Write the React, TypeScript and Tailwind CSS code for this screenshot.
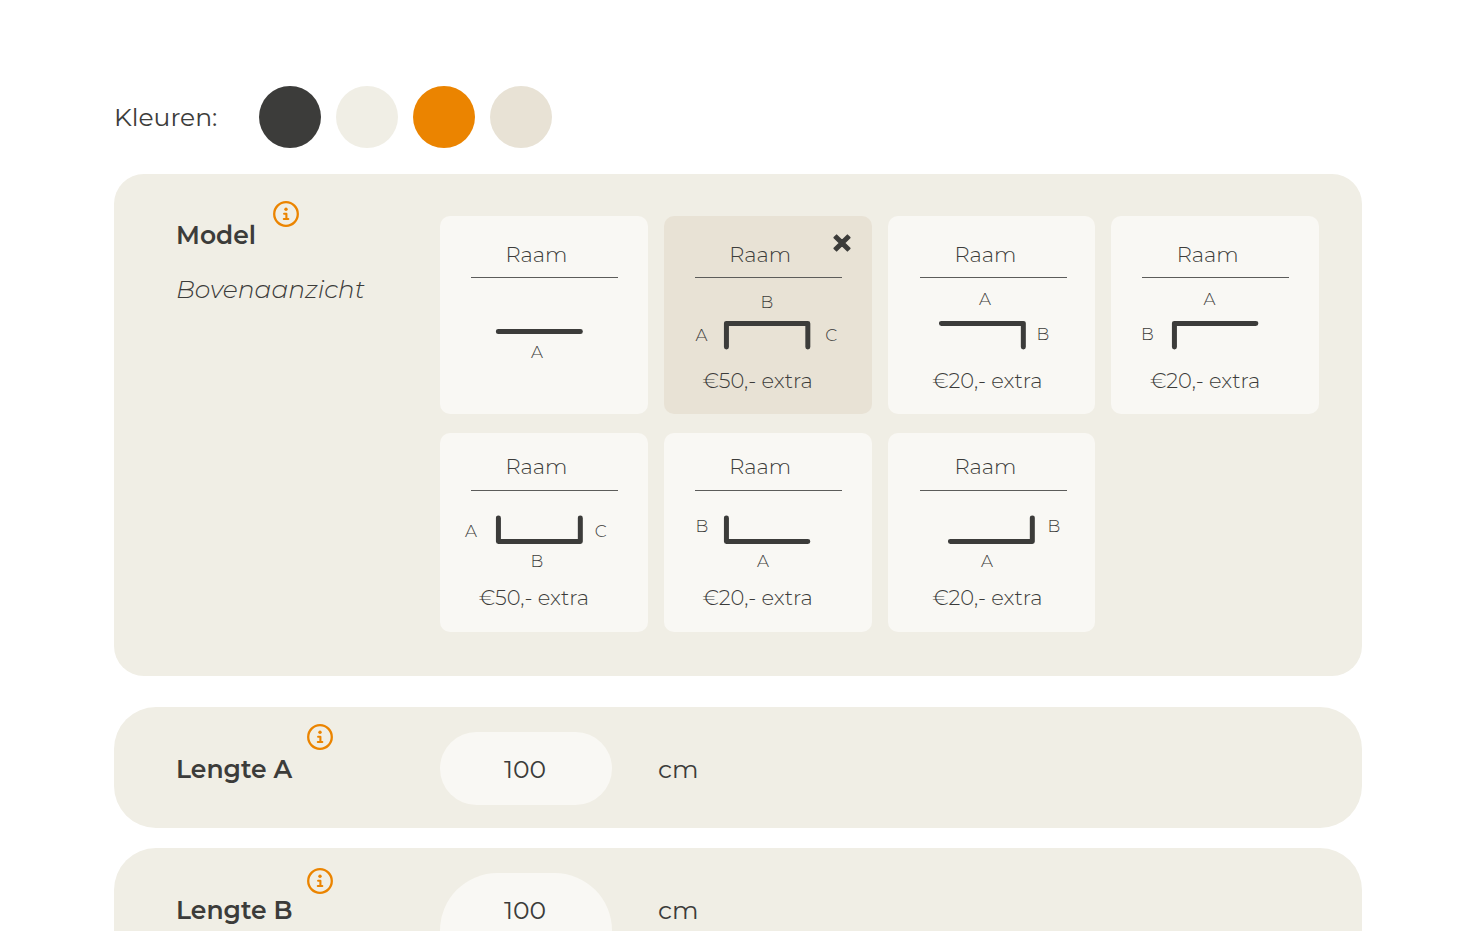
import { useState } from "react";

type Label = { text: string; x: number; y: number };

type Model = {
  id: string;
  name: string;
  path: string;
  labels: Label[];
  price?: string;
  bottom?: boolean;
  cornerRight?: boolean;
};

const models: Model[] = [
  {
    id: "straight",
    name: "Raam",
    path: "M58.5 53.5H140.5",
    labels: [{ text: "A", x: 97, y: 80 }],
  },
  {
    id: "u-top",
    name: "Raam",
    path: "M62.5 69V45.5H144V69",
    labels: [
      { text: "A", x: 37.5, y: 63 },
      { text: "B", x: 103, y: 30 },
      { text: "C", x: 167.5, y: 63 },
    ],
    price: "€50,- extra",
  },
  {
    id: "corner-top-right",
    name: "Raam",
    path: "M53.5 45.5H135.5V69",
    labels: [
      { text: "A", x: 97, y: 27 },
      { text: "B", x: 155, y: 62 },
    ],
    price: "€20,- extra",
    cornerRight: true,
  },
  {
    id: "corner-top-left",
    name: "Raam",
    path: "M63.5 69V45.5H145",
    labels: [
      { text: "A", x: 98.5, y: 27 },
      { text: "B", x: 36.5, y: 62 },
    ],
    price: "€20,- extra",
  },
  {
    id: "u-bottom",
    name: "Raam",
    path: "M58.5 27V50.5H140.5V27",
    labels: [
      { text: "A", x: 31, y: 46 },
      { text: "B", x: 97, y: 76 },
      { text: "C", x: 161, y: 46 },
    ],
    price: "€50,- extra",
    bottom: true,
  },
  {
    id: "corner-bottom-left",
    name: "Raam",
    path: "M62.5 27V50.5H144",
    labels: [
      { text: "A", x: 99, y: 76 },
      { text: "B", x: 38, y: 41 },
    ],
    price: "€20,- extra",
    bottom: true,
  },
  {
    id: "corner-bottom-right",
    name: "Raam",
    path: "M62.5 50.5H144.5V27",
    labels: [
      { text: "A", x: 99, y: 76 },
      { text: "B", x: 166, y: 41 },
    ],
    price: "€20,- extra",
    bottom: true,
    cornerRight: true,
  },
];

const swatches = [
  { name: "Antraciet", className: "bg-[#3c3c3a]" },
  { name: "Gebroken wit", className: "bg-[#f0eee5]" },
  { name: "Oranje", className: "bg-[#eb8400]" },
  { name: "Zand", className: "bg-[#e8e2d5]" },
];

function InfoButton({ label }: { label: string }) {
  return (
    <button type="button" aria-label={label} className="shrink-0 self-start text-[#eb8400]">
      <svg width="26" height="26" viewBox="0 0 26 26" fill="none" stroke="currentColor" className="block">
        <circle cx="13" cy="13" r="11.8" strokeWidth="2.3" />
        <circle cx="13" cy="8.3" r="1.7" fill="currentColor" stroke="none" />
        <path d="M11.1 12.7H13.4V17.8M10.8 18H15.3" strokeWidth="2.1" strokeLinecap="round" strokeLinejoin="round" />
      </svg>
    </button>
  );
}

function CrossIcon() {
  return (
    <svg width="18" height="18" viewBox="0 0 18 18" className="absolute top-[18px] right-[21px]">
      <path
        d="M3.6 1.2 9 6.6 14.4 1.2 16.8 3.6 11.4 9 16.8 14.4 14.4 16.8 9 11.4 3.6 16.8 1.2 14.4 6.6 9 1.2 3.6z"
        fill="#3c3c3a"
        stroke="#3c3c3a"
        strokeWidth="1.6"
        strokeLinejoin="round"
      />
    </svg>
  );
}

function ModelCard({ model, selected, onSelect }: { model: Model; selected: boolean; onSelect: () => void }) {
  return (
    <button
      type="button"
      aria-pressed={selected}
      onClick={onSelect}
      className={`relative flex flex-col rounded-[10px] text-[21px] leading-[30px] font-light ${
        model.bottom ? "pt-[19px] pb-[19px]" : "pt-6 pb-[18px]"
      } ${selected ? "bg-[#e8e2d5]" : "bg-[#f9f8f4]"}`}
    >
      <span
        className={`self-stretch border-b border-[#5c5c5a] pr-4 ${model.bottom ? "pb-2" : "pb-[7px]"} ${
          model.cornerRight ? "mr-7 ml-8" : "mr-[30px] ml-[31px]"
        }`}
      >
        {model.name}
      </span>
      <svg viewBox={model.bottom ? "0 0 208 92" : "0 0 208 88"} className="w-full">
        <path
          d={model.path}
          fill="none"
          stroke="#3c3c3a"
          strokeWidth="5"
          strokeLinecap="round"
          strokeLinejoin="round"
        />
        {model.labels.map((l) => (
          <text key={l.text} x={l.x} y={l.y} textAnchor="middle" fontSize="17" fill="#3c3c3a">
            {l.text}
          </text>
        ))}
      </svg>
      {model.price && <span className={`self-stretch ${model.cornerRight ? "pr-2" : "pr-5"}`}>{model.price}</span>}
      {selected && <CrossIcon />}
    </button>
  );
}

export default function App() {
  const [selected, setSelected] = useState("u-top");
  const [lengthA, setLengthA] = useState("100");
  const [lengthB, setLengthB] = useState("100");

  return (
    <main className="h-screen overflow-hidden bg-white px-[114px] pt-[86px] font-['Montserrat','Inter',sans-serif] text-[25px] leading-9 text-[#3c3c3a] antialiased">
      {/* colours */}
      <div className="mb-[26px] flex items-center">
        <span className="w-[145px] shrink-0 font-normal">Kleuren:</span>
        <div className="flex gap-[15px]">
          {swatches.map((s) => (
            <button
              key={s.name}
              type="button"
              aria-label={s.name}
              className={`size-[62px] rounded-full ${s.className}`}
            />
          ))}
        </div>
      </div>

      {/* model */}
      <section className="flex rounded-[30px] bg-[#f0eee5] pt-[42px] pr-[43px] pb-11 pl-[62px]">
        <div className="-mt-[15px] w-[264px] shrink-0">
          <div className="flex gap-[17px]">
            <h2 className="mt-4 font-semibold">Model</h2>
            <InfoButton label="Info over model" />
          </div>
          <p className="mt-[18px] font-light italic">Bovenaanzicht</p>
        </div>
        <div className="grid grow grid-cols-4 gap-x-4 gap-y-[19px]">
          {models.map((m) => (
            <ModelCard key={m.id} model={m} selected={m.id === selected} onSelect={() => setSelected(m.id)} />
          ))}
        </div>
      </section>

      {/* lengths */}
      <section className="mt-[31px] flex items-start rounded-[42px] bg-[#f0eee5] pt-[25px] pb-[23px] pl-[62px]">
        <div className="-mt-2 flex w-[264px] shrink-0 gap-[15px]">
          <label htmlFor="length-a" className="mt-[27px] font-semibold">
            Lengte A
          </label>
          <InfoButton label="Info over lengte A" />
        </div>
        <input
          id="length-a"
          value={lengthA}
          onChange={(e) => setLengthA(e.target.value)}
          className="h-[73px] w-[172px] rounded-full bg-[#f9f8f4] pt-0.5 pr-0.5 text-center font-normal outline-none"
        />
        <span className="mt-[19px] ml-[46px] font-normal">cm</span>
      </section>

      <section className="mt-5 flex items-start rounded-[42px] bg-[#f0eee5] pt-[25px] pb-[23px] pl-[62px]">
        <div className="-mt-[5px] flex w-[264px] shrink-0 gap-[14px]">
          <label htmlFor="length-b" className="mt-6 font-semibold">
            Lengte B
          </label>
          <InfoButton label="Info over lengte B" />
        </div>
        <input
          id="length-b"
          value={lengthB}
          onChange={(e) => setLengthB(e.target.value)}
          className="h-[115px] w-[172px] rounded-full bg-[#f9f8f4] pr-0.5 pb-10 text-center font-normal outline-none"
        />
        <span className="mt-[19px] ml-[46px] font-normal">cm</span>
      </section>
    </main>
  );
}
